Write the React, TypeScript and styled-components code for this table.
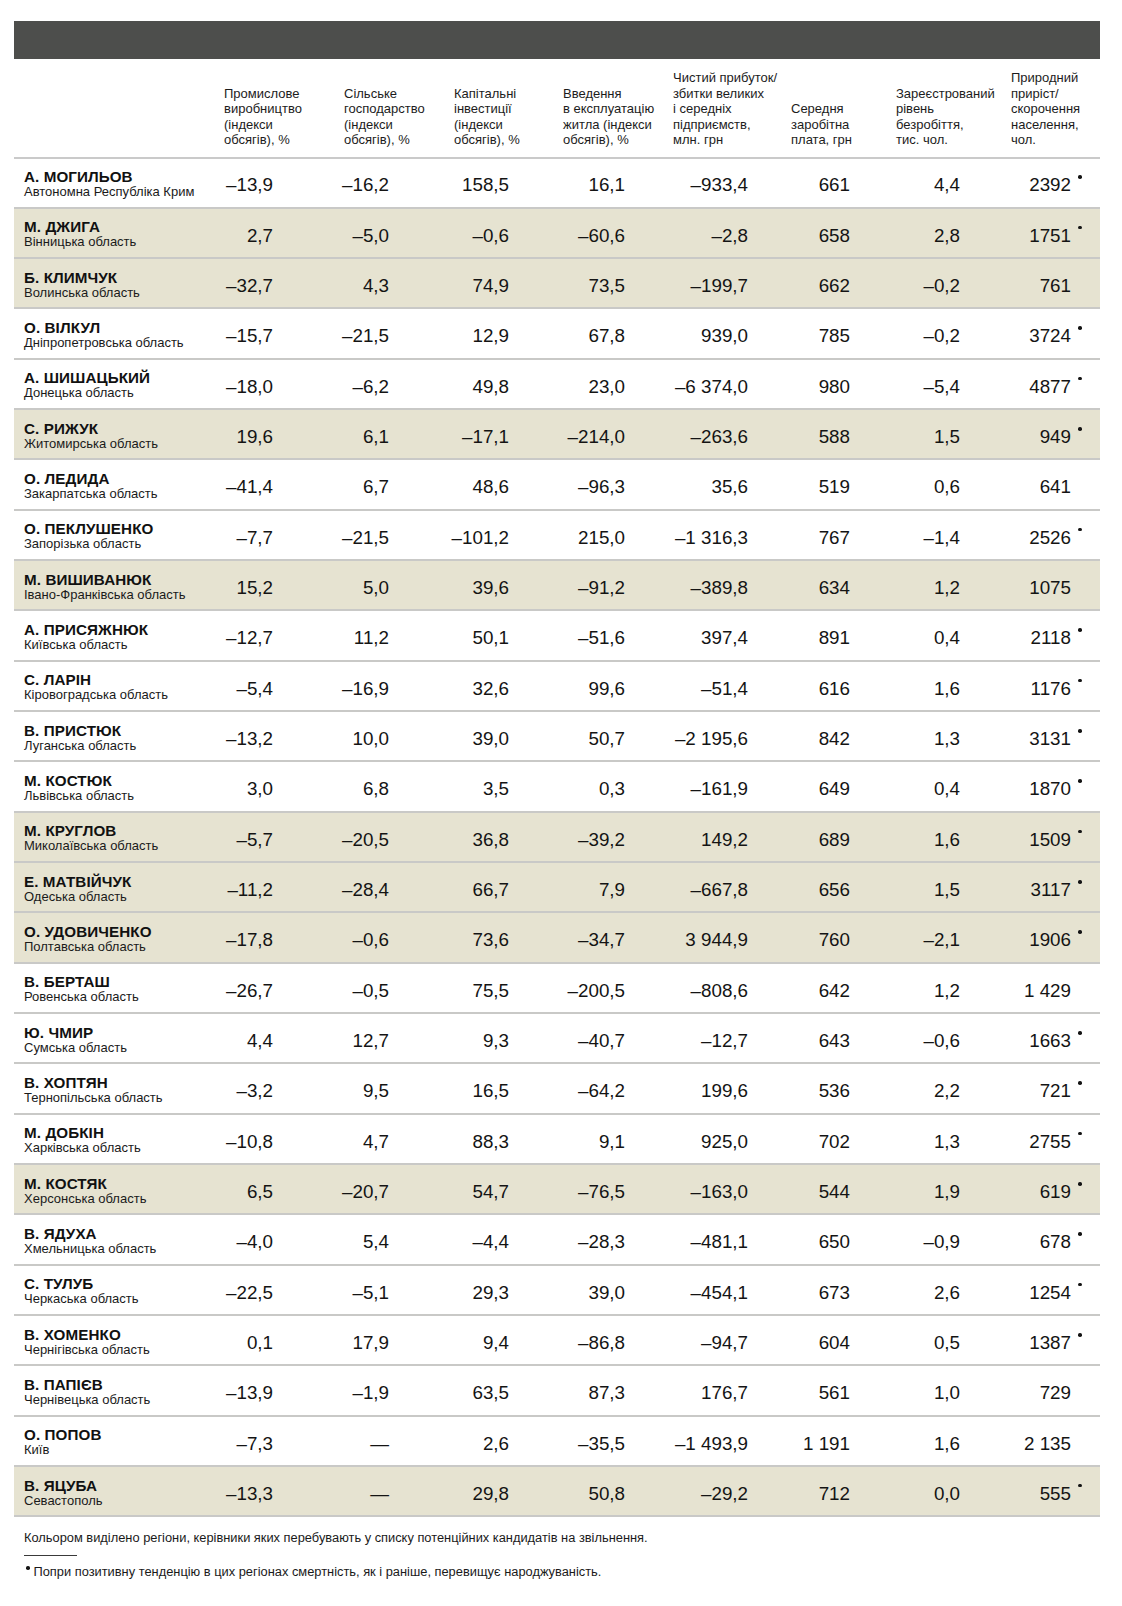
import React from "react";
import styled, { createGlobalStyle } from "styled-components";

const GlobalStyle = createGlobalStyle`
  html, body { margin: 0; padding: 0; background: #ffffff; }
  body { font-family: "Liberation Sans", Arial, sans-serif; color: #161616; }
`;

type Row = {
  name: string;
  region: string;
  values: string[];
  dot?: boolean;
  shaded?: boolean;
};

const headers: string[][] = [
  ["Промислове", "виробництво", "(індекси", "обсягів), %"],
  ["Сільське", "господарство", "(індекси", "обсягів), %"],
  ["Капітальні", "інвестиції", "(індекси", "обсягів), %"],
  ["Введення", "в експлуатацію", "житла (індекси", "обсягів), %"],
  ["Чистий прибуток/", "збитки великих", "і середніх", "підприємств,", "млн. грн"],
  ["Середня", "заробітна", "плата, грн"],
  ["Зареєстрований", "рівень", "безробіття,", "тис. чол."],
  ["Природний", "приріст/", "скорочення", "населення,", "чол."],
];

// right padding of the numbers inside each value column
const valuePad = [71, 65, 54, 48, 43, 46, 51, 29];

const rows: Row[] = [
  { name: "А. МОГИЛЬОВ", region: "Автономна Республіка Крим", values: ["-13,9", "-16,2", "158,5", "16,1", "-933,4", "661", "4,4", "2392"], dot: true },
  { name: "М. ДЖИГА", region: "Вінницька область", values: ["2,7", "-5,0", "-0,6", "-60,6", "-2,8", "658", "2,8", "1751"], dot: true, shaded: true },
  { name: "Б. КЛИМЧУК", region: "Волинська область", values: ["-32,7", "4,3", "74,9", "73,5", "-199,7", "662", "-0,2", "761"], shaded: true },
  { name: "О. ВІЛКУЛ", region: "Дніпропетровська область", values: ["-15,7", "-21,5", "12,9", "67,8", "939,0", "785", "-0,2", "3724"], dot: true },
  { name: "А. ШИШАЦЬКИЙ", region: "Донецька область", values: ["-18,0", "-6,2", "49,8", "23,0", "-6 374,0", "980", "-5,4", "4877"], dot: true },
  { name: "С. РИЖУК", region: "Житомирська область", values: ["19,6", "6,1", "-17,1", "-214,0", "-263,6", "588", "1,5", "949"], dot: true, shaded: true },
  { name: "О. ЛЕДИДА", region: "Закарпатська область", values: ["-41,4", "6,7", "48,6", "-96,3", "35,6", "519", "0,6", "641"] },
  { name: "О. ПЕКЛУШЕНКО", region: "Запорізька область", values: ["-7,7", "-21,5", "-101,2", "215,0", "-1 316,3", "767", "-1,4", "2526"], dot: true },
  { name: "М. ВИШИВАНЮК", region: "Івано-Франківська область", values: ["15,2", "5,0", "39,6", "-91,2", "-389,8", "634", "1,2", "1075"], shaded: true },
  { name: "А. ПРИСЯЖНЮК", region: "Київська область", values: ["-12,7", "11,2", "50,1", "-51,6", "397,4", "891", "0,4", "2118"], dot: true },
  { name: "С. ЛАРІН", region: "Кіровоградська область", values: ["-5,4", "-16,9", "32,6", "99,6", "-51,4", "616", "1,6", "1176"], dot: true },
  { name: "В. ПРИСТЮК", region: "Луганська область", values: ["-13,2", "10,0", "39,0", "50,7", "-2 195,6", "842", "1,3", "3131"], dot: true },
  { name: "М. КОСТЮК", region: "Львівська область", values: ["3,0", "6,8", "3,5", "0,3", "-161,9", "649", "0,4", "1870"], dot: true },
  { name: "М. КРУГЛОВ", region: "Миколаївська область", values: ["-5,7", "-20,5", "36,8", "-39,2", "149,2", "689", "1,6", "1509"], dot: true, shaded: true },
  { name: "Е. МАТВІЙЧУК", region: "Одеська область", values: ["-11,2", "-28,4", "66,7", "7,9", "-667,8", "656", "1,5", "3117"], dot: true, shaded: true },
  { name: "О. УДОВИЧЕНКО", region: "Полтавська область", values: ["-17,8", "-0,6", "73,6", "-34,7", "3 944,9", "760", "-2,1", "1906"], dot: true, shaded: true },
  { name: "В. БЕРТАШ", region: "Ровенська область", values: ["-26,7", "-0,5", "75,5", "-200,5", "-808,6", "642", "1,2", "1 429"] },
  { name: "Ю. ЧМИР", region: "Сумська область", values: ["4,4", "12,7", "9,3", "-40,7", "-12,7", "643", "-0,6", "1663"], dot: true },
  { name: "В. ХОПТЯН", region: "Тернопільська область", values: ["-3,2", "9,5", "16,5", "-64,2", "199,6", "536", "2,2", "721"], dot: true },
  { name: "М. ДОБКІН", region: "Харківська область", values: ["-10,8", "4,7", "88,3", "9,1", "925,0", "702", "1,3", "2755"], dot: true },
  { name: "М. КОСТЯК", region: "Херсонська область", values: ["6,5", "-20,7", "54,7", "-76,5", "-163,0", "544", "1,9", "619"], dot: true, shaded: true },
  { name: "В. ЯДУХА", region: "Хмельницька область", values: ["-4,0", "5,4", "-4,4", "-28,3", "-481,1", "650", "-0,9", "678"], dot: true },
  { name: "С. ТУЛУБ", region: "Черкаська область", values: ["-22,5", "-5,1", "29,3", "39,0", "-454,1", "673", "2,6", "1254"], dot: true },
  { name: "В. ХОМЕНКО", region: "Чернігівська область", values: ["0,1", "17,9", "9,4", "-86,8", "-94,7", "604", "0,5", "1387"], dot: true },
  { name: "В. ПАПІЄВ", region: "Чернівецька область", values: ["-13,9", "-1,9", "63,5", "87,3", "176,7", "561", "1,0", "729"] },
  { name: "О. ПОПОВ", region: "Київ", values: ["-7,3", "—", "2,6", "-35,5", "-1 493,9", "1 191", "1,6", "2 135"] },
  { name: "В. ЯЦУБА", region: "Севастополь", values: ["-13,3", "—", "29,8", "50,8", "-29,2", "712", "0,0", "555"], dot: true, shaded: true },
];

// the source typesets the minus sign as a dash wider than a hyphen
const formatValue = (v: string) => v.replace(/^-/, "\u2013");

const GRID = "210px 120px 110px 109px 110px 118px 105px 115px 89px";

const Page = styled.div`
  padding: 20.5px 22px 0 14px;
  width: 1086px;
`;

const TitleBar = styled.div`
  height: 38px;
  background: #4d4e4c;
`;

const HeaderRow = styled.div`
  display: grid;
  grid-template-columns: ${GRID};
  align-items: end;
  height: 100px;
  box-sizing: border-box;
  padding-bottom: 9px;
  border-bottom: 2px solid #cacaca;
`;

const HeaderCell = styled.div`
  font-size: 13px;
  line-height: 15.4px;
  color: #1c1c1c;
  white-space: nowrap;
`;

const TableRow = styled.div<{ $shaded?: boolean }>`
  display: grid;
  grid-template-columns: ${GRID};
  align-items: center;
  height: 50.33px;
  box-sizing: border-box;
  padding-top: 3px;
  border-bottom: 2px solid #c9c9c7;
  background: ${(p) => (p.$shaded ? "#e6e3d1" : "transparent")};
`;

const NameCell = styled.div`
  padding-left: 10px;
  display: flex;
  flex-direction: column;
`;

const PersonName = styled.span`
  font-weight: 700;
  font-size: 15.2px;
  line-height: 16px;
  color: #111;
  letter-spacing: 0.1px;
`;

const Region = styled.span`
  font-size: 13px;
  line-height: 14px;
  color: #1a1a1a;
`;

const ValueCell = styled.div<{ $pad: number }>`
  display: flex;
  justify-content: flex-end;
  padding-right: ${(p) => p.$pad}px;
  padding-top: 2.6px;
  font-size: 18.8px;
  line-height: 20px;
  color: #141414;
  white-space: nowrap;
  min-width: 0;
`;

const Num = styled.span`
  position: relative;
  flex-shrink: 0;
`;

const Dot = styled.span`
  position: absolute;
  left: calc(100% + 7px);
  top: 0px;
  width: 3.5px;
  height: 3.5px;
  border-radius: 50%;
  background: #141414;
`;

const Footer = styled.div`
  padding-left: 10px;
  padding-top: 13px;
  display: flex;
  flex-direction: column;
  align-items: flex-start;
`;

const Note = styled.p`
  margin: 0;
  font-size: 12.85px;
  line-height: 15px;
  color: #1a1a1a;
`;

const Rule = styled.div`
  width: 53px;
  height: 1px;
  background: #3a3a3a;
  margin: 10px 0 8px;
`;

const FootNote = styled(Note)`
  display: flex;
  align-items: flex-start;
  gap: 4px;
`;

const FootDot = styled.span`
  width: 3.5px;
  height: 3.5px;
  border-radius: 50%;
  background: #141414;
  margin: 2px 0 0 2px;
  flex-shrink: 0;
`;

export default function App() {
  return (
    <>
      <GlobalStyle />
      <Page>
        <TitleBar />
        <HeaderRow>
          <div />
          {headers.map((lines, i) => (
            <HeaderCell key={i}>
              {lines.map((l, j) => (
                <div key={j}>{l}</div>
              ))}
            </HeaderCell>
          ))}
        </HeaderRow>
        {rows.map((r) => (
          <TableRow key={r.name} $shaded={r.shaded}>
            <NameCell>
              <PersonName>{r.name}</PersonName>
              <Region>{r.region}</Region>
            </NameCell>
            {r.values.map((v, i) => (
              <ValueCell key={i} $pad={valuePad[i]}>
                <Num>
                  {formatValue(v)}
                  {i === 7 && r.dot ? <Dot /> : null}
                </Num>
              </ValueCell>
            ))}
          </TableRow>
        ))}
        <Footer>
          <Note>
            Кольором виділено регіони, керівники яких перебувають у списку потенційних кандидатів на звільнення.
          </Note>
          <Rule />
          <FootNote>
            <FootDot />
            <span>Попри позитивну тенденцію в цих регіонах смертність, як і раніше, перевищує народжуваність.</span>
          </FootNote>
        </Footer>
      </Page>
    </>
  );
}
